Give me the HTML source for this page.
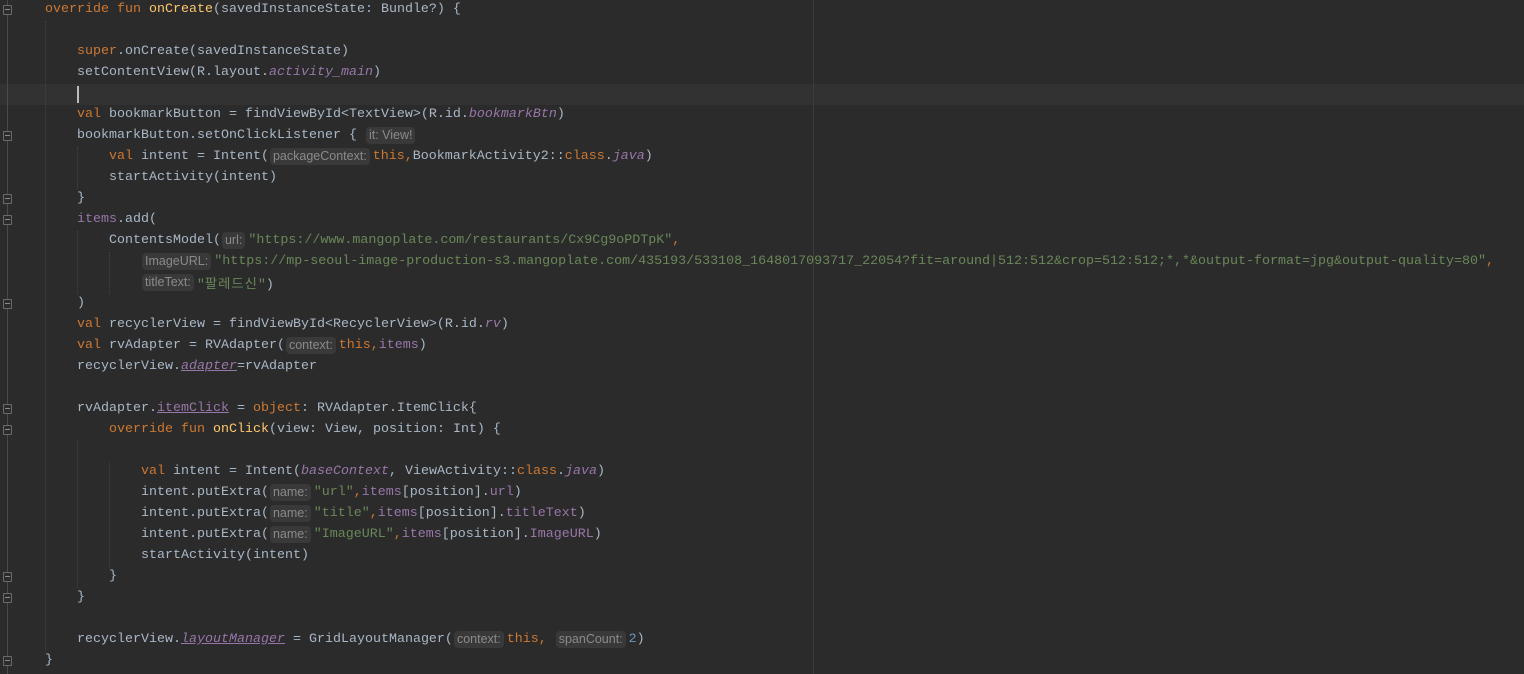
<!DOCTYPE html>
<html><head><meta charset="utf-8"><style>
html,body{margin:0;padding:0;background:#2b2b2b;width:1524px;height:674px;overflow:hidden}
.ed{position:relative;width:1524px;height:674px;font-family:"Liberation Mono","Noto Sans CJK KR",monospace;font-size:13.33px;color:#a9b7c6}
.r{position:absolute;left:45px;height:21px;line-height:20px;white-space:pre}
.k{color:#cc7832}.f{color:#ffc66d}.s{color:#6a8759}.p{color:#9876aa}.i{font-style:italic}.u{text-decoration:underline}
.h{display:inline-block;font-family:"Liberation Sans",sans-serif;font-size:12.5px;color:#8a8a8a;background:#393939;border-radius:4px;padding:0 3px;line-height:17px;height:17px;margin:0 3px 0 1px;vertical-align:top;margin-top:1px}
.kr{font-family:"Noto Sans CJK KR",sans-serif;letter-spacing:1px}
.cur{position:absolute;left:0;top:84px;width:1524px;height:21px;background:#323232}
.mg{position:absolute;left:813px;top:0;width:1px;height:674px;background:#3c3c3c}
.gl{position:absolute;left:7px;top:0;width:1px;height:674px;background:#4a4a4a}
.fd{position:absolute;left:3px;width:7px;height:8px;border:1px solid #6a6a6a;background:#2b2b2b;border-radius:1px}
.fd:after{content:"";position:absolute;left:1px;top:3px;width:5px;height:1px;background:#8a8a8a}
.ig{position:absolute;width:0;border-left:1px dotted #444}
.caret{position:absolute;left:77px;top:86px;width:2px;height:17px;background:#bbb}
</style></head><body><div class="ed">
<div class="cur"></div><div class="mg"></div><div class="gl"></div>
<div class="fd" style="top:5px"></div><div class="fd" style="top:131px"></div><div class="fd" style="top:194px"></div><div class="fd" style="top:215px"></div><div class="fd" style="top:404px"></div><div class="fd" style="top:425px"></div><div class="fd" style="top:572px"></div><div class="fd" style="top:593px"></div><div class="fd" style="top:656px"></div><div class="fd" style="top:299px"></div>
<div class="ig" style="left:45px;top:21px;height:630px"></div>
<div class="ig" style="left:77px;top:147px;height:42px"></div>
<div class="ig" style="left:77px;top:231px;height:63px"></div>
<div class="ig" style="left:77px;top:441px;height:147px"></div>
<div class="ig" style="left:109px;top:252px;height:42px"></div>
<div class="ig" style="left:109px;top:462px;height:105px"></div>
<div class="caret"></div>
<div class="r" style="top:0"><span class="k">override fun </span><span class="f">onCreate</span>(savedInstanceState: Bundle?) {</div>
<div class="r" style="top:42px;left:77px"><span class="k">super</span>.onCreate(savedInstanceState)</div>
<div class="r" style="top:63px;left:77px">setContentView(R.layout.<span class="p i">activity_main</span>)</div>
<div class="r" style="top:105px;left:77px"><span class="k">val </span>bookmarkButton = findViewById&lt;TextView&gt;(R.id.<span class="p i">bookmarkBtn</span>)</div>
<div class="r" style="top:126px;left:77px">bookmarkButton.setOnClickListener { <span class="h">it: View!</span></div>
<div class="r" style="top:147px;left:109px"><span class="k">val </span>intent = Intent(<span class="h">packageContext:</span><span class="k">this,</span>BookmarkActivity2::<span class="k">class</span>.<span class="p i">java</span>)</div>
<div class="r" style="top:168px;left:109px">startActivity(intent)</div>
<div class="r" style="top:189px;left:77px">}</div>
<div class="r" style="top:210px;left:77px"><span class="p">items</span>.add(</div>
<div class="r" style="top:231px;left:109px">ContentsModel(<span class="h">url:</span><span class="s">"https://www.mangoplate.com/restaurants/Cx9Cg9oPDTpK"</span><span class="k">,</span></div>
<div class="r" style="top:252px;left:141px"><span class="h">ImageURL:</span><span class="s">"https://mp-seoul-image-production-s3.mangoplate.com/435193/533108_1648017093717_22054?fit=around|512:512&amp;crop=512:512;*,*&amp;output-format=jpg&amp;output-quality=80"</span><span class="k">,</span></div>
<div class="r" style="top:273px;left:141px"><span class="h">titleText:</span><span class="s">"<span class="kr">팔레드신</span>"</span>)</div>
<div class="r" style="top:294px;left:77px">)</div>
<div class="r" style="top:315px;left:77px"><span class="k">val </span>recyclerView = findViewById&lt;RecyclerView&gt;(R.id.<span class="p i">rv</span>)</div>
<div class="r" style="top:336px;left:77px"><span class="k">val </span>rvAdapter = RVAdapter(<span class="h">context:</span><span class="k">this,</span><span class="p">items</span>)</div>
<div class="r" style="top:357px;left:77px">recyclerView.<span class="p i u">adapter</span>=rvAdapter</div>
<div class="r" style="top:399px;left:77px">rvAdapter.<span class="p u">itemClick</span> = <span class="k">object</span>: RVAdapter.ItemClick{</div>
<div class="r" style="top:420px;left:109px"><span class="k">override fun </span><span class="f">onClick</span>(view: View, position: Int) {</div>
<div class="r" style="top:462px;left:141px"><span class="k">val </span>intent = Intent(<span class="p i">baseContext</span>, ViewActivity::<span class="k">class</span>.<span class="p i">java</span>)</div>
<div class="r" style="top:483px;left:141px">intent.putExtra(<span class="h">name:</span><span class="s">"url"</span><span class="k">,</span><span class="p">items</span>[position].<span class="p">url</span>)</div>
<div class="r" style="top:504px;left:141px">intent.putExtra(<span class="h">name:</span><span class="s">"title"</span><span class="k">,</span><span class="p">items</span>[position].<span class="p">titleText</span>)</div>
<div class="r" style="top:525px;left:141px">intent.putExtra(<span class="h">name:</span><span class="s">"ImageURL"</span><span class="k">,</span><span class="p">items</span>[position].<span class="p">ImageURL</span>)</div>
<div class="r" style="top:546px;left:141px">startActivity(intent)</div>
<div class="r" style="top:567px;left:109px">}</div>
<div class="r" style="top:588px;left:77px">}</div>
<div class="r" style="top:630px;left:77px">recyclerView.<span class="p i u">layoutManager</span> = GridLayoutManager(<span class="h">context:</span><span class="k">this, </span><span class="h">spanCount:</span><span style="color:#6897bb">2</span>)</div>
<div class="r" style="top:651px">}</div>
</div></body></html>
